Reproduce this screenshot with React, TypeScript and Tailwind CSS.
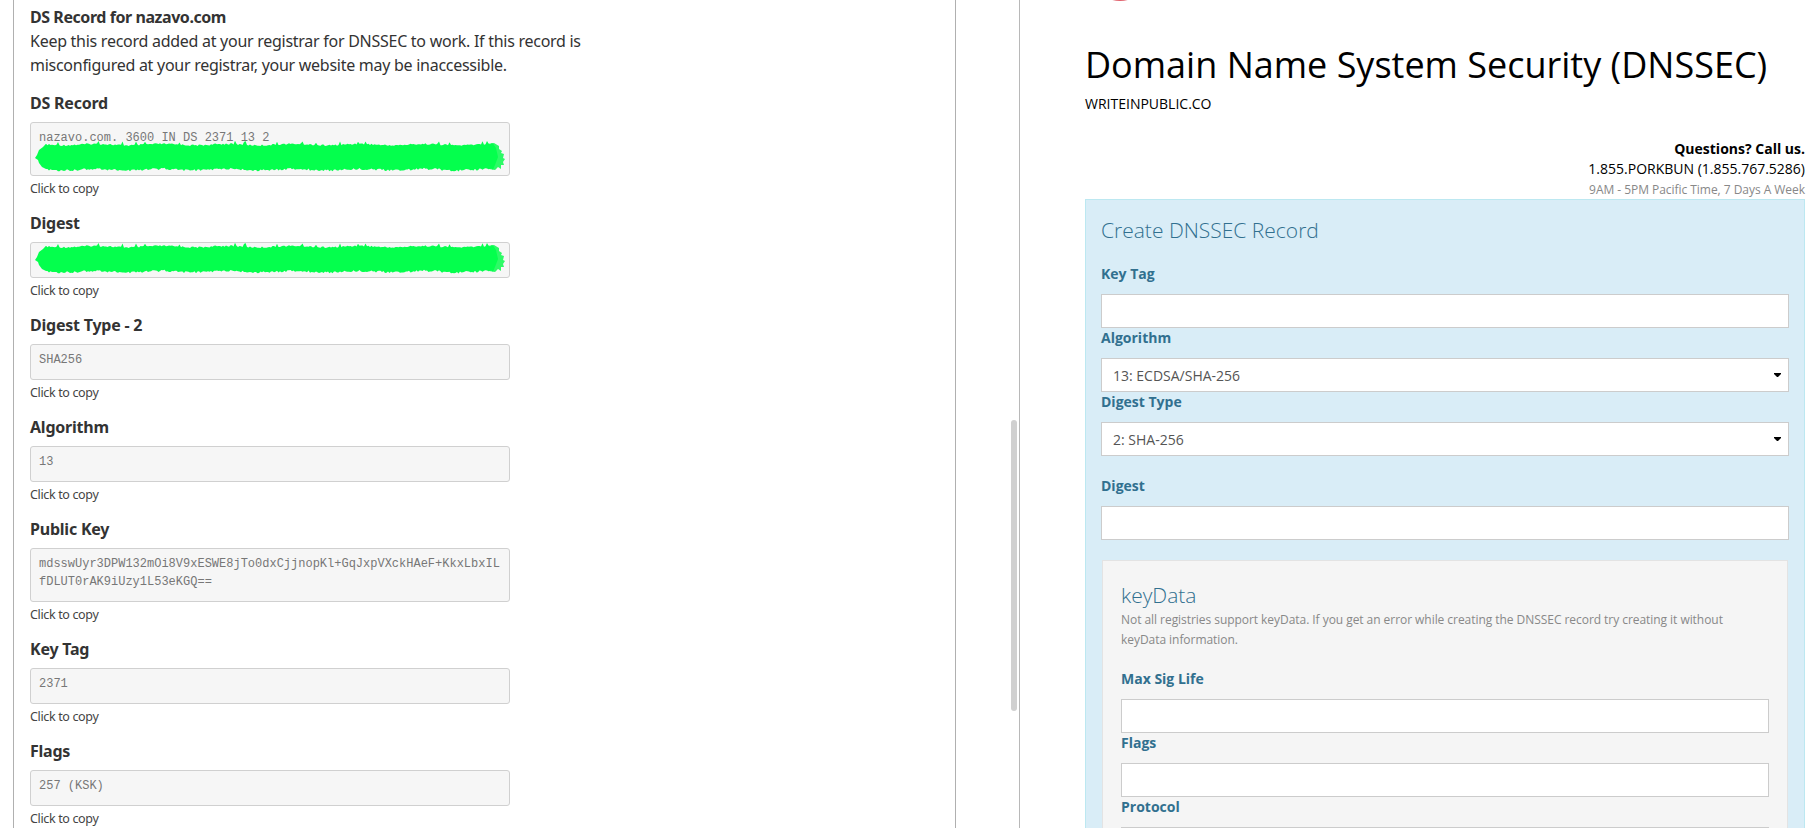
import type { ReactNode } from 'react';

const records = [
  { title: 'DS Record', value: 'nazavo.com. 3600 IN DS 2371 13 2', tall: true, scribble: 'top-[17px]' },
  { title: 'Digest', value: '', scribble: '-top-px' },
  { title: 'Digest Type - 2', value: 'SHA256' },
  { title: 'Algorithm', value: '13' },
  {
    title: 'Public Key',
    value: 'mdsswUyr3DPW132mOi8V9xESWE8jTo0dxCjjnopKl+GqJxpVXckHAeF+KkxLbxILfDLUT0rAK9iUzy1L53eKGQ==',
    tall: true,
  },
  { title: 'Key Tag', value: '2371' },
  { title: 'Flags', value: '257 (KSK)' },
];

const noise = (n: number) => {
  const v = Math.sin(n * 12.9898) * 43758.5453;
  return v - Math.floor(v);
};

// Rough edged marker stroke that hides a value
function Scribble({ className }: { className: string }) {
  const top: string[] = [];
  const bottom: string[] = [];
  for (let i = 0; i <= 298; i++) {
    const x = 11 + i * 1.5;
    const wave = Math.sin(i / 7) * 0.7;
    const spike = noise(i + 500) > 0.93 ? 3 : 0;
    top.push(`${x},${3.8 + wave + noise(i) * 1.6 - spike}`);
    bottom.unshift(`${x},${28.5 + wave + noise(i + 900) * 2.2}`);
  }
  const body = [...top, '461,8', '463,17', '460,25', ...bottom, '7,27', '4,23', '3,20', '0,18', '2,15', '4,10', '8,7'];
  return (
    <svg className={`absolute left-1 ${className}`} width="472" height="34" aria-hidden="true">
      <polygon
        points="452,4 459,3 464,6 464,9 467,11 466,13 469,14 468,18 470,19 468,22 469,25 466,25 466,29 463,27 460,30 454,29"
        fill="#2dfa66"
      />
      <polygon points={body.join(' ')} fill="#04ff4d" />
    </svg>
  );
}

function RecordField({ title, value, tall, scribble }: { title: string; value: string; tall?: boolean; scribble?: string }) {
  return (
    <div className="mb-[13px]">
      <h3 className="h-6 text-base leading-6 font-bold tracking-[-0.22px]">{title}</h3>
      <div
        className={`relative mt-[7px] w-[480px] rounded-[3px] border border-[#d0d0d0] bg-[#f6f6f6] px-2 pt-[6px] font-['Liberation_Mono',monospace] text-xs leading-[18px] break-all text-[#777] ${tall ? 'h-[54px]' : 'h-9'}`}
      >
        {value}
        {scribble && <Scribble className={scribble} />}
      </div>
      <p className="mt-1 h-[18px] text-[12.5px] leading-[18px] tracking-[-0.35px] text-[#444]">Click to copy</p>
    </div>
  );
}

function Label({ children }: { children: ReactNode }) {
  return <label className="block h-5 text-sm leading-5 font-bold text-[#31708f]">{children}</label>;
}

function Field({ label, value }: { label: string; value?: string }) {
  return (
    <div className="h-16">
      <Label>{label}</Label>
      <div className="mt-[10px] flex h-[34px] items-center justify-between border border-[#ccc] bg-white pr-[7px] pl-[11px] text-sm text-[#555]">
        <span className="pt-px">{value}</span>
        {value && (
          <svg width="7" height="4" viewBox="0 0 7 4" fill="#000">
            <path d="M0 0h7v1L4 4H3L0 1z" />
          </svg>
        )}
      </div>
    </div>
  );
}

export default function App() {
  return (
    <div className="flex h-[828px] w-[1819px] overflow-hidden bg-white">
      <section className="ml-[13px] w-[943px] shrink-0 border-x border-[#b0b0b0] pl-4 font-['Noto_Sans',sans-serif] text-[#333]">
        <h2 className="mt-[5px] text-base leading-6 font-bold tracking-[-0.44px]">DS Record for nazavo.com</h2>
        <p className="text-base leading-6 tracking-[-0.27px]">
          Keep this record added at your registrar for DNSSEC to work. If this record is
          <br />
          misconfigured at your registrar, your website may be inaccessible.
        </p>
        <div className="mt-[14px]">
          {records.map((record) => (
            <RecordField key={record.title} {...record} />
          ))}
        </div>
      </section>

      <div className="flex w-16 shrink-0 justify-end border-r border-[#b8b8b8]">
        <div className="mt-[420px] mr-[2px] h-[291px] w-[6px] rounded-full bg-[#d0d0d0]" />
      </div>

      <section className="relative ml-[65px] w-[720px] shrink-0 font-['Open_Sans',sans-serif]">
        <div className="absolute -top-[59px] left-[5px] size-[60px] rounded-full bg-[#e0606c]" />
        <h1 className="mt-[40px] h-[50px] text-[36px] leading-[50px] whitespace-nowrap text-black">
          Domain Name System Security (DNSSEC)
        </h1>
        <p className="mt-[4px] h-5 text-sm leading-5 text-black">WRITEINPUBLIC.CO</p>
        <div className="mt-[25px] h-[60px] text-right text-sm leading-5 text-black">
          <p className="font-bold">Questions? Call us.</p>
          <p>1.855.PORKBUN (1.855.767.5286)</p>
          <p className="pt-px text-xs leading-5 tracking-[-0.04px] text-[#888]">9AM - 5PM Pacific Time, 7 Days A Week</p>
        </div>

        <div className="h-[700px] border border-[#bce8f1] bg-[#d9edf7] px-[15px] text-[#31708f]">
          <h2 className="mt-[15px] h-[30px] text-[21px] leading-[30px] font-light">Create DNSSEC Record</h2>
          <div className="mt-[19px]">
            <Field label="Key Tag" />
            <Field label="Algorithm" value="13: ECDSA/SHA-256" />
            <Field label="Digest Type" value="2: SHA-256" />
          </div>
          <div className="mt-5">
            <Field label="Digest" />
          </div>
          <div className="mx-px mt-5 h-[400px] border border-[#e3e3e3] bg-[#f5f5f5] px-[18px] pt-5">
            <h2 className="h-[29px] text-[21px] leading-[28px] font-light">keyData</h2>
            <p className="text-xs leading-5 tracking-[-0.05px] text-[#888]">
              Not all registries support keyData. If you get an error while creating the DNSSEC record try creating it
              without
              <br />
              keyData information.
            </p>
            <div className="mt-[19px]">
              <Field label="Max Sig Life" />
              <Field label="Flags" />
              <Field label="Protocol" />
            </div>
          </div>
        </div>
      </section>
    </div>
  );
}
